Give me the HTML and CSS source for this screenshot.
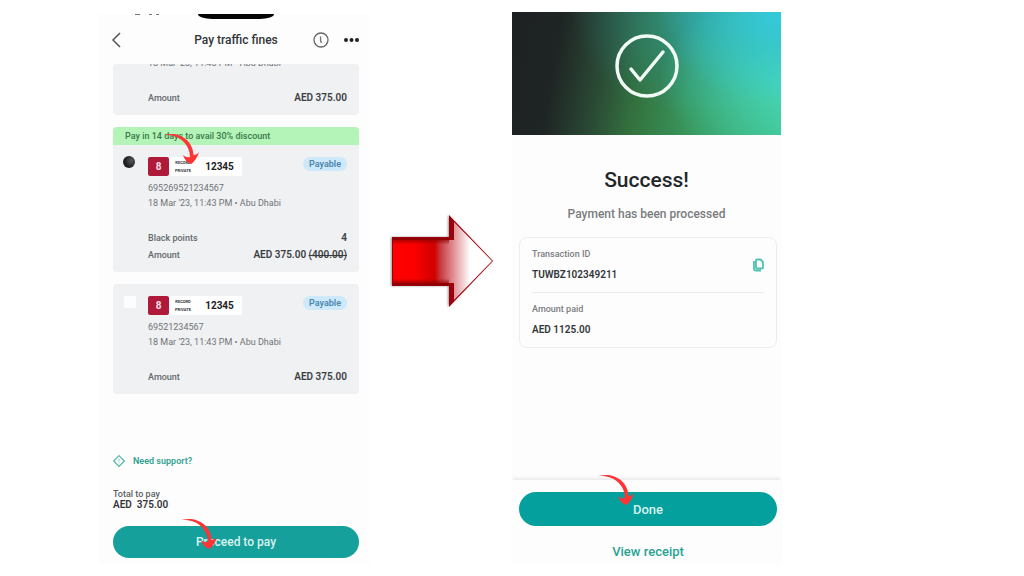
FILE: index.html
```html
<!DOCTYPE html>
<html lang="en">
<head>
    <meta charset="utf-8">
    <title>Pay traffic fines</title>
    <link rel="stylesheet" href="styles.css">
</head>
<body>
    <!-- tap arrow, shared by all the hints -->
    <svg width="0" height="0" class="defs">
        <symbol id="tap" viewBox="0 0 36 32">
            <path fill="#ff3434" d="M0 2 C13 -2 29 6 29.500 22 Q33 22 35 19 Q33 26 27.500 31 Q21 29 19 22 Q22 25 26 24 C26 11 15 1 0 2 Z"/>
        </symbol>
    </svg>

    <main class="stage">
        <section class="phone pay">
            <div class="status-bar">
                <svg class="status-marks" width="26" height="2"><path fill="#777" d="M0 0h5v1h-5zM14 0h3v1h-3zM21 0h3v1h-3z"/></svg>
                <span class="notch"></span>
            </div>

            <header class="top-bar">
                <button class="icon-btn back" aria-label="Back">
                    <svg width="10" height="16" viewBox="0 0 10 16"><path d="M9 1L2 8l7 7" fill="none" stroke="#555" stroke-width="1.5"/></svg>
                </button>
                <h1>Pay traffic fines</h1>
                <div class="top-actions">
                    <button class="icon-btn" aria-label="Information">
                        <svg width="16" height="16" viewBox="0 0 16 16"><circle cx="8" cy="8" r="7" fill="none" stroke="#666" stroke-width="1.3"/><path d="M7.600 4.500v4.300l.9 2.200" fill="none" stroke="#777" stroke-width="1.4"/></svg>
                    </button>
                    <button class="icon-btn" aria-label="More">
                        <svg width="16" height="16" viewBox="0 0 16 16"><circle cx="3" cy="8" r="2" fill="#222"/><circle cx="8.500" cy="8" r="2" fill="#222"/><circle cx="14" cy="8" r="2" fill="#222"/></svg>
                    </button>
                </div>
            </header>

            <div class="fines">
                <article class="fine scrolled">
                    <p class="meta">18 Mar '23, 11:43 PM • Abu Dhabi</p>
                    <div class="row"><span>Amount</span><strong>AED 375.00</strong></div>
                </article>

                <article class="fine offer">
                    <p class="banner">Pay in 14 days to avail 30% discount</p>
                    <div class="fine-body">
                        <input type="checkbox" id="fine1" class="pick" aria-label="Select fine 695269521234567" checked>
                        <div class="fine-head">
                            <div class="plate">
                                <span class="code">8</span>
                                <span class="kind">RECORD<br>PRIVATE</span>
                                <span class="number">12345</span>
                            </div>
                            <span class="badge">Payable</span>
                        </div>
                        <p class="meta">695269521234567</p>
                        <p class="meta">18 Mar '23, 11:43 PM • Abu Dhabi</p>
                        <div class="rows">
                            <div class="row"><span>Black points</span><strong>4</strong></div>
                            <div class="row"><span>Amount</span><strong>AED 375.00 <s>(400.00)</s></strong></div>
                        </div>
                    </div>
                    <svg class="tap tap-plate"><use href="#tap"/></svg>
                </article>

                <article class="fine">
                    <div class="fine-body">
                        <input type="checkbox" id="fine2" class="pick" aria-label="Select fine 69521234567">
                        <div class="fine-head">
                            <div class="plate">
                                <span class="code">8</span>
                                <span class="kind">RECORD<br>PRIVATE</span>
                                <span class="number">12345</span>
                            </div>
                            <span class="badge">Payable</span>
                        </div>
                        <p class="meta">69521234567</p>
                        <p class="meta">18 Mar '23, 11:43 PM • Abu Dhabi</p>
                        <div class="rows">
                            <div class="row"><span>Amount</span><strong>AED 375.00</strong></div>
                        </div>
                    </div>
                </article>
            </div>

            <footer class="pay-footer">
                <a href="#" class="support">
                    <svg width="12" height="12" viewBox="0 0 12 12"><path d="M6 .7L11.300 6 6 11.300.7 6z" fill="none" stroke="#55b5a5" stroke-width="1.2" stroke-linejoin="round"/><path d="M6 3.500v3M6 7.500v1" stroke="#8accc0"/></svg>
                    Need support?
                </a>
                <p class="total-label">Total to pay</p>
                <p class="total">AED&nbsp; 375.00</p>
                <div class="action">
                    <button class="main-btn">Proceed to pay</button>
                    <svg class="tap tap-pay"><use href="#tap"/></svg>
                </div>
            </footer>
        </section>

        <div class="next">
            <svg width="106" height="98" viewBox="0 0 106 98">
                <defs>
                    <linearGradient id="arrowFill">
                        <stop offset="0" stop-color="#ff0000"/>
                        <stop offset=".22" stop-color="#fa0000"/>
                        <stop offset=".42" stop-color="#d00000"/>
                        <stop offset=".48" stop-color="#c83a40"/>
                        <stop offset=".78" stop-color="#ffffff"/>
                    </linearGradient>
                    <linearGradient id="arrowEdge" x1="0" y1="0" x2="0" y2="1">
                        <stop offset="0" stop-color="#900000"/>
                        <stop offset=".14" stop-color="#900000" stop-opacity="0"/>
                        <stop offset=".86" stop-color="#900000" stop-opacity="0"/>
                        <stop offset="1" stop-color="#900000"/>
                    </linearGradient>
                    <filter id="arrowShadow"><feDropShadow dx="-1" dy="0" stdDeviation="1" flood-opacity=".4"/></filter>
                </defs>
                <path d="M3 24H60V2L104 48 60 94V73H3Z" fill="#9c0008" filter="url(#arrowShadow)"/>
                <path d="M4 27H65V9L103 48 65 87V70H4Z" fill="url(#arrowFill)"/>
                <path d="M4 25H60V72H4Z" fill="url(#arrowEdge)"/>
            </svg>
        </div>

        <section class="phone done">
            <div class="hero">
                <svg width="64" height="64" viewBox="0 0 64 64" fill="none" stroke="#f1faf5"><circle cx="32" cy="32" r="30" stroke-width="3.5"/><path d="M16 35l9 11L48 18" stroke-width="3.5" stroke-linecap="round" stroke-linejoin="round"/></svg>
            </div>
            <h2>Success!</h2>
            <p class="subtitle">Payment has been processed</p>

            <div class="receipt">
                <div class="receipt-row">
                    <div>
                        <p class="label">Transaction ID</p>
                        <p class="value">TUWBZ102349211</p>
                    </div>
                    <button class="icon-btn" aria-label="Copy transaction ID">
                        <svg width="12" height="14" viewBox="0 0 12 14" fill="none" stroke="#4fc0b0" stroke-width="1.8" stroke-linejoin="round"><path d="M5 1.500h3.500L11 4v5.500q0 1-1 1H5q-1 0-1-1v-7q0-1 1-1z"/><path d="M2 3v8q0 1.500 1.500 1.500H9"/></svg>
                    </button>
                </div>
                <div class="receipt-row">
                    <div>
                        <p class="label">Amount paid</p>
                        <p class="value">AED 1125.00</p>
                    </div>
                </div>
            </div>

            <footer class="done-footer">
                <div class="action">
                    <button class="main-btn">Done</button>
                    <svg class="tap tap-done"><use href="#tap"/></svg>
                </div>
                <a href="#" class="view">View receipt</a>
            </footer>
        </section>
    </main>
</body>
</html>
```
FILE: styles.css
```css
* {
    box-sizing: border-box;
}
body {
    margin: 0;
    background: #fff;
    color: #333539;
    font-family: Roboto, "Liberation Sans", sans-serif;
    font-size: 9px;
    line-height: 12px;
}
h1, h2, p {
    margin: 0;
}
button {
    font-family: inherit;
    border: none;
    cursor: pointer;
}
a {
    text-decoration: none;
}
.defs {
    position: absolute;
}
.stage {
    display: grid;
    grid-template-columns: 99fr 271fr 142fr 269fr 243fr;
    padding-top: 12px;
}
.phone {
    display: flex;
    flex-direction: column;
    background: #fdfdfd;
    min-height: 552px;
}
.icon-btn {
    display: flex;
    padding: 0;
    background: none;
}

/* Left phone */
.pay {
    grid-column: 2;
    margin-top: 2px;
    min-height: 550px;
    padding: 0 11px 6px 14px;
}
.status-bar {
    display: flex;
    justify-content: center;
    position: relative;
    height: 5px;
}
.status-marks {
    position: absolute;
    left: 22px;
    top: 0;
}
.notch {
    width: 76px;
    background: #050505;
    border-radius: 0 0 14px 14px / 0 0 5px 5px;
}
.top-bar {
    display: grid;
    grid-template-columns: 1fr auto 1fr;
    align-items: center;
    height: 45px;
    padding-bottom: 3px;
}
.top-bar h1 {
    font-size: 12px;
    font-weight: 500;
}
.back {
    justify-self: start;
    margin-left: -2px;
}
.top-actions {
    display: flex;
    justify-content: flex-end;
    gap: 14px;
}
.fines {
    display: flex;
    flex-direction: column;
    gap: 12px;
}
.fine {
    position: relative;
    background: #eff1f3;
    border-radius: 4px;
}
.fine-body {
    position: relative;
    padding: 12px 12px 10px 35px;
}
.scrolled {
    height: 51px;
    padding: 0 12px 0 35px;
    overflow: hidden;
}
.scrolled .meta {
    margin-top: -7px;
    margin-bottom: 22px;
}
.banner {
    height: 18px;
    padding-left: 12px;
    line-height: 18px;
    color: #39794b;
    font-weight: 500;
    background: #b4f4b8;
    border-radius: 4px 4px 0 0;
}
.offer .row + .row {
    margin-top: 3px;
}
.pick {
    appearance: none;
    position: absolute;
    left: 11px;
    top: 12px;
    width: 12px;
    height: 12px;
    margin: 0;
    background: #fcfdfd;
    border-radius: 2px;
}
.pick:checked {
    left: 10px;
    top: 11px;
    background: radial-gradient(circle at 70% 40%, #55585a, #1c1e1f 60%);
    border-radius: 50%;
}
.fine-head {
    display: flex;
    justify-content: space-between;
    align-items: flex-start;
    margin-bottom: 6px;
}
.plate {
    display: flex;
    align-items: center;
    width: 94px;
    height: 19px;
    background: #fff;
}
.code {
    width: 21px;
    line-height: 19px;
    text-align: center;
    color: #f5dfe3;
    font-size: 10px;
    font-weight: 700;
    background: #b01a3a;
    border-radius: 2px;
}
.kind {
    width: 28px;
    text-align: center;
    font-size: 4px;
    line-height: 8px;
    font-weight: 700;
}
.number {
    flex: 1;
    text-align: center;
    color: #222;
    font-size: 10px;
    font-weight: 700;
}
.badge {
    width: 44px;
    line-height: 14px;
    text-align: center;
    color: #4a86ac;
    font-weight: 600;
    background: #cde9fb;
    border-radius: 7px;
}
.meta {
    color: #707376;
}
.meta + .meta {
    margin-top: 3px;
}
.rows {
    margin-top: 22px;
}
.row {
    display: flex;
    justify-content: space-between;
    line-height: 14px;
    color: #66696c;
    font-weight: 500;
}
.row strong {
    color: #3b3d41;
    font-size: 10px;
    font-weight: 600;
}
.pay-footer {
    margin-top: auto;
}
.support {
    display: flex;
    align-items: center;
    gap: 8px;
    color: #33a391;
    font-weight: 600;
}
.total-label {
    margin-top: 22px;
    line-height: 10px;
    color: #5c5f62;
    font-weight: 500;
}
.total {
    font-size: 10px;
    font-weight: 600;
}
.action {
    position: relative;
    margin-top: 15px;
}
.main-btn {
    display: block;
    width: 100%;
    height: 32px;
    color: #d9f3ef;
    font-size: 12px;
    font-weight: 500;
    background: #15a09c;
    border-radius: 17px;
}

/* Tap hints lie over the screens */
.tap {
    position: absolute;
    width: 36px;
    height: 32px;
}
.tap-plate {
    left: 51px;
    top: 6px;
}
.tap-pay {
    left: 69px;
    top: -8px;
}
.tap-done {
    left: 80px;
    top: -18px;
}

.next {
    display: flex;
    justify-content: center;
    align-items: center;
    grid-column: 3;
    padding: 0 0 52px 2px;
}

/* Right phone */
.done {
    grid-column: 4;
    text-align: center;
}
.hero {
    display: flex;
    justify-content: center;
    height: 123px;
    padding-top: 22px;
    background:
        radial-gradient(ellipse 46% 75% at 100% 0%, #34c8d8 10%, rgba(52, 200, 216, 0) 100%),
        radial-gradient(ellipse 50% 75% at 105% 55%, #45d6b8 5%, rgba(69, 214, 184, 0) 100%),
        radial-gradient(ellipse 50% 85% at 72% 0%, rgba(42, 150, 165, 0.65), rgba(42, 150, 165, 0) 100%),
        linear-gradient(100deg, #1d2022 0%, #1f2524 18%, #2a4a35 34%, #33723f 48%, #389359 66%, #42c088 100%);
}
.done h2 {
    margin-top: 32px;
    color: #24272a;
    font-size: 21px;
    line-height: 26px;
    font-weight: 500;
}
.subtitle {
    margin-top: 13px;
    color: #7a7c80;
    font-size: 12px;
    line-height: 16px;
    font-weight: 500;
}
.receipt {
    margin: 15px 4px 0 7px;
    padding: 0 12px;
    text-align: left;
    border: 1px solid #ededef;
    border-radius: 8px;
}
.receipt-row {
    display: flex;
    justify-content: space-between;
    align-items: center;
    padding: 10px 0;
}
.receipt-row + .receipt-row {
    border-top: 1px solid #ececee;
}
.label {
    color: #7c7e82;
    font-weight: 500;
}
.value {
    margin-top: 8px;
    font-size: 10px;
    line-height: 14px;
    font-weight: 600;
}
.done-footer {
    margin-top: auto;
    padding: 12px 4px 4px 7px;
    box-shadow: 0 -3px 3px -1px #e9e9ea;
}
.done .action {
    margin-top: 0;
}
.done .main-btn {
    height: 34px;
    font-size: 13px;
    background: #03a09d;
}
.view {
    display: block;
    margin-top: 18px;
    color: #2ba394;
    font-size: 13px;
    line-height: 16px;
    font-weight: 500;
}
```
